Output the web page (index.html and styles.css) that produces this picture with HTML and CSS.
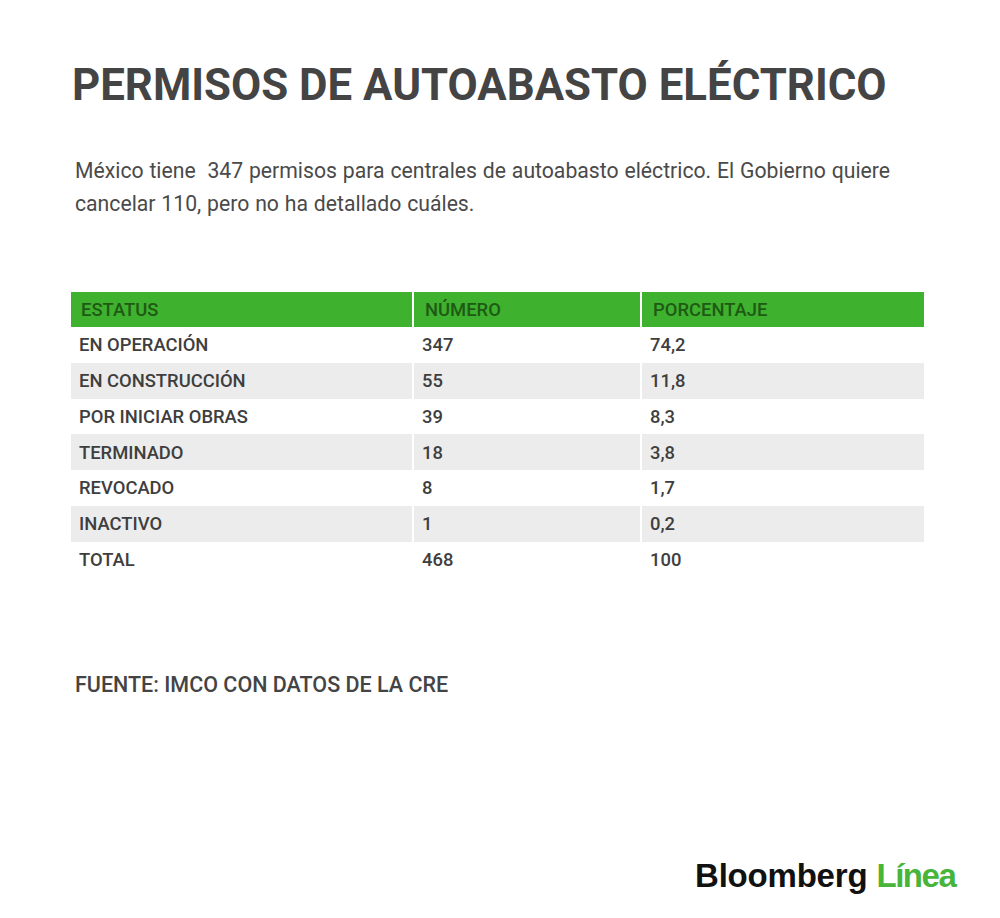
FILE: index.html
```html
<!DOCTYPE html>
<html lang="es">
<head>
<meta charset="utf-8">
<link rel="stylesheet" href="styles.css">
</head>
<body>
<main class="page">
  <h1 class="title">PERMISOS DE AUTOABASTO ELÉCTRICO</h1>
  <p class="lead">México tiene&nbsp; 347 permisos para centrales de autoabasto eléctrico. El Gobierno quiere cancelar 110, pero no ha detallado cuáles.</p>
  <table class="data">
    <thead>
      <tr><th class="c1">ESTATUS</th><th class="c2">NÚMERO</th><th class="c3">PORCENTAJE</th></tr>
    </thead>
    <tbody>
      <tr><td>EN OPERACIÓN</td><td>347</td><td>74,2</td></tr>
      <tr><td>EN CONSTRUCCIÓN</td><td>55</td><td>11,8</td></tr>
      <tr><td>POR INICIAR OBRAS</td><td>39</td><td>8,3</td></tr>
      <tr><td>TERMINADO</td><td>18</td><td>3,8</td></tr>
      <tr><td>REVOCADO</td><td>8</td><td>1,7</td></tr>
      <tr><td>INACTIVO</td><td>1</td><td>0,2</td></tr>
      <tr><td>TOTAL</td><td>468</td><td>100</td></tr>
    </tbody>
  </table>
  <p class="source">FUENTE: IMCO CON DATOS DE LA CRE</p>
  <div class="logo"><span class="bb">Bloomberg</span> <span class="linea">Línea</span></div>
</main>
</body>
</html>
```
FILE: styles.css
```css
html, body {
  margin: 0;
  padding: 0;
  background: #fff;
}
.page {
  width: 1000px;
  height: 918px;
  box-sizing: border-box;
  padding: 59px 0 0 0;
  font-family: Roboto, "Noto Sans", sans-serif;
  color: #444;
  display: flex;
  flex-direction: column;
}
.title {
  margin: 0 0 0 72px;
  font-size: 43.8px;
  line-height: 52px;
  font-weight: 700;
  color: #444;
  white-space: nowrap;
}
.lead {
  margin: 43px 0 0 75px;
  width: 850px;
  font-size: 21.2px;
  line-height: 33px;
  font-weight: 400;
  color: #4a4a4a;
  word-spacing: 0.6px;
}
.data {
  margin: 72px 0 0 71px;
  width: 853px;
  border-collapse: collapse;
  font-size: 18.4px;
  font-weight: 500;
}
.data th, .data td {
  text-align: left;
  padding: 0 0 0 8px;
  height: 35.75px;
  border-left: 2px solid #fff;
  box-sizing: border-box;
}
.data th:first-child, .data td:first-child {
  border-left: none;
}
.data th {
  background: #3eb12f;
  color: #1e5a14;
  font-weight: 500;
  height: 35px;
  padding-left: 11px;
}
.data th:first-child {
  padding-left: 10px;
}
.data .c1 { width: 342px; }
.data .c2 { width: 228px; }
.data .c3 { width: 283px; }
.data tbody tr:nth-child(even) td {
  background: #ececec;
}
.data td {
  color: #3e3e3e;
}
.source {
  margin: 96px 0 0 75px;
  font-size: 21.5px;
  line-height: 24px;
  font-weight: 500;
  color: #444;
}
.logo {
  margin: 161px 0 0 695px;
  font-family: "Liberation Sans", Arial, sans-serif;
  font-weight: 700;
  font-size: 33px;
  line-height: 36px;
  white-space: nowrap;
}
.bb {
  color: #111;
  letter-spacing: -0.2px;
}
.linea {
  color: #47b43a;
  letter-spacing: -1.5px;
}
```
